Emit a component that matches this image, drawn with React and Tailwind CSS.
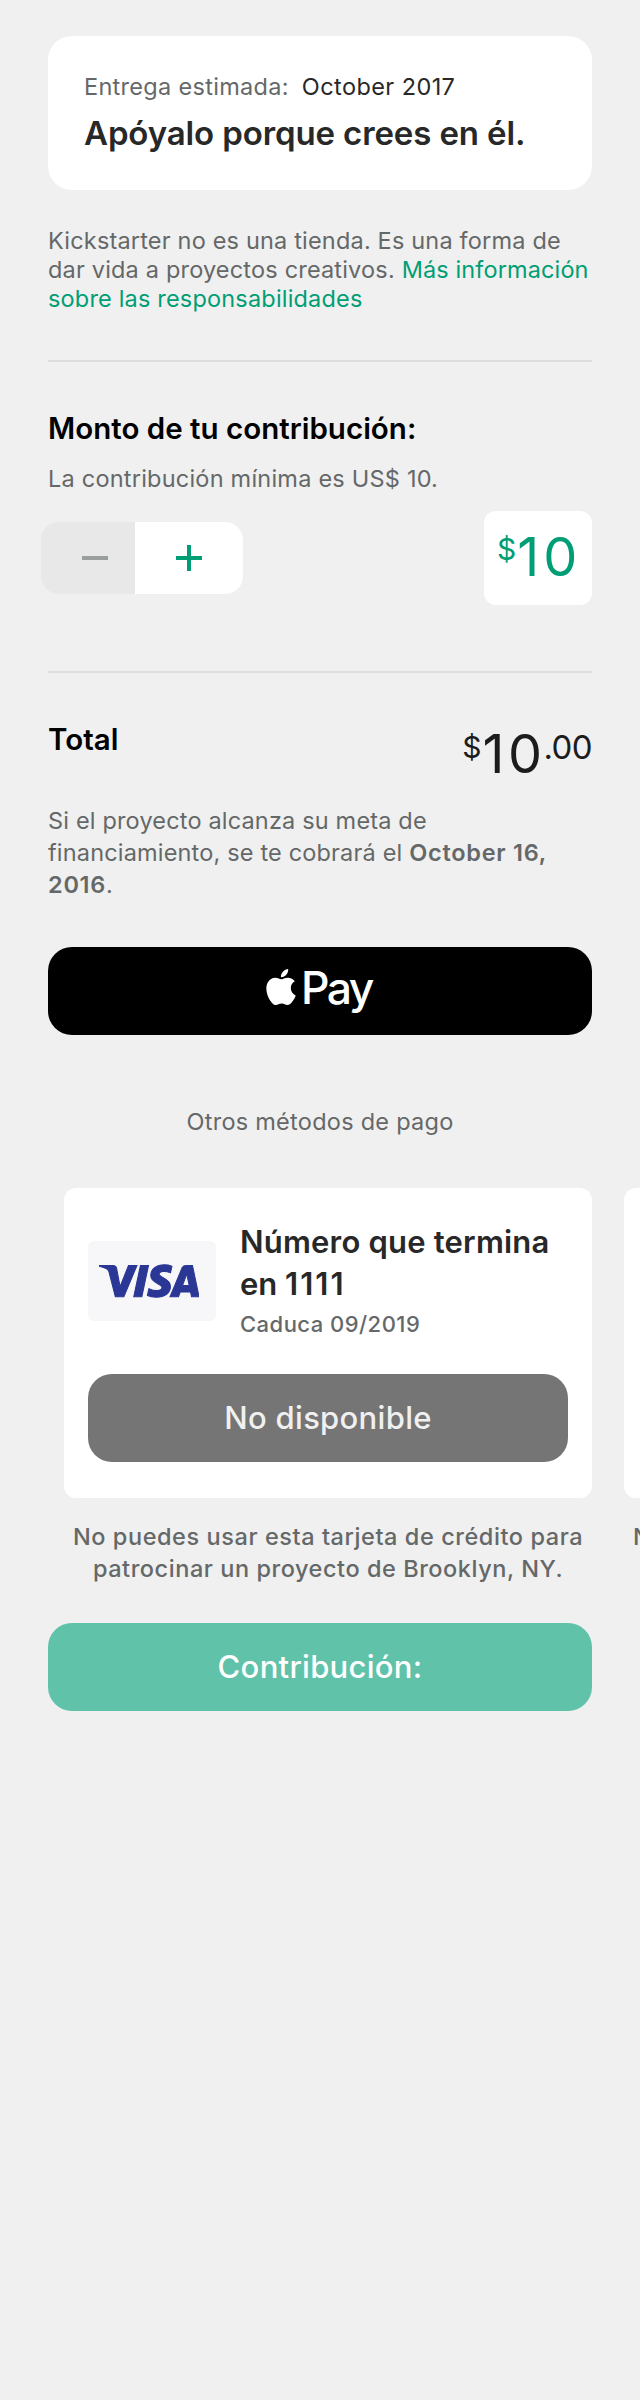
import { SiApple, SiVisa } from "react-icons/si";

function Line({ className = "", children }) {
  return <div className={`whitespace-nowrap ${className}`}>{children}</div>;
}

function Divider({ className }) {
  return <hr className={`h-[2px] border-0 bg-[#dddddd] ${className}`} />;
}

function RewardCard() {
  return (
    <section className="h-[154px] rounded-[24px] bg-white px-9 pt-[37px]">
      <div className="flex text-[23.5px] leading-7">
        <Line className="tracking-[0.3px] text-[#656868]">Entrega estimada:</Line>
        <Line className="ml-[13px] tracking-[0.42px] text-[#282828]">October 2017</Line>
      </div>
      <h1 className="mt-[12px] whitespace-nowrap text-[33px] font-semibold leading-10 tracking-[-0.12px] text-[#282828]">
        Apóyalo porque crees en él.
      </h1>
    </section>
  );
}

function Stepper() {
  return (
    <div className="-ml-[7px] flex h-[72px] w-[202px] overflow-hidden rounded-[18px]">
      <button className="flex w-[94px] items-center justify-center bg-[#e8e8e8] pl-[14px]">
        <svg className="h-[28px] w-[28px]" viewBox="0 0 28 28">
          <path d="M1 14h26" stroke="#9b9e9e" strokeWidth="4" />
        </svg>
      </button>
      <button className="flex flex-1 items-center justify-center bg-white">
        <svg className="h-[28px] w-[28px]" viewBox="0 0 28 28">
          <path d="M1 14h26M14 1v26" stroke="#009e74" strokeWidth="4" />
        </svg>
      </button>
    </div>
  );
}

function PaymentCard() {
  return (
    <div className="w-[528px] shrink-0">
      <div className="h-[310px] rounded-[12px] bg-white px-6 pt-[33px]">
        <div className="flex h-[120px] items-center gap-6">
          <div className="flex h-20 w-32 items-center rounded-md bg-[#f7f7f9] pl-[11px]">
            <SiVisa className="h-[100px] w-[100px] text-[#2a3795]" stroke="currentColor" strokeWidth="0.25" />
          </div>
          <div>
            <Line className="text-[31px] font-semibold leading-[42px] tracking-[0.2px] text-[#282828]">Número que termina</Line>
            <Line className="text-[31px] font-semibold leading-[42px] text-[#282828]">
              en <span className="tracking-[2px]">1111</span>
            </Line>
            <Line className="pt-px text-[22px] font-medium leading-9 tracking-[0.47px] text-[#656868]">Caduca 09/2019</Line>
          </div>
        </div>
        <button className="mt-[33px] h-[88px] w-full rounded-[24px] bg-[#757575] text-[31px] font-medium tracking-[0.3px] text-[#f0f0f0]">
          No disponible
        </button>
      </div>
      <div className="mt-[23px] flex flex-col items-center text-[23.5px] font-medium leading-8 text-[#656868]">
        <Line className="tracking-[0.57px]">No puedes usar esta tarjeta de crédito para</Line>
        <Line className="tracking-[0.55px]">patrocinar un proyecto de Brooklyn, NY.</Line>
      </div>
    </div>
  );
}

export default function App() {
  return (
    <main className="h-[2400px] w-[640px] overflow-hidden bg-[#f0f0f0] px-12 pt-9 font-['Inter',sans-serif] text-[#656868]">
      <RewardCard />

      <div className="mt-9 text-[23.5px] leading-[29px] tracking-[0.18px]">
        <Line>Kickstarter no es una tienda. Es una forma de</Line>
        <Line>
          dar vida a proyectos creativos. <span className="tracking-[0.12px] text-[#009e74]">Más información</span>
        </Line>
        <Line className="text-[#009e74]">sobre las responsabilidades</Line>
      </div>

      <Divider className="mt-[47px]" />

      <h2 className="mt-[48px] whitespace-nowrap text-[29.5px] font-semibold leading-9 tracking-[0.01px] text-black">
        Monto de tu contribución:
      </h2>
      <Line className="mt-[19px] text-[23.5px] leading-7 tracking-[0.22px]">La contribución mínima es US$ 10.</Line>
      <div className="mt-[18px] flex h-[94px] items-center justify-between">
        <Stepper />
        <div className="flex h-[94px] w-[108px] items-start rounded-[12px] bg-white pl-[13px] text-[#009e74]">
          <span className="mt-[20px] text-[30px] leading-9">$</span>
          <span className="ml-px mt-[16px] text-[54px] leading-[60px] tracking-[4px]">10</span>
        </div>
      </div>

      <Divider className="mt-[66px]" />

      <div className="mt-[48px] flex h-[84px] items-start justify-between">
        <h2 className="whitespace-nowrap text-[29.5px] font-semibold leading-9 text-black">Total</h2>
        <div className="flex items-start text-[#1c1c1c]">
          <span className="mt-[8px] text-[30px] leading-9">$</span>
          <span className="ml-px mt-[3px] text-[54px] leading-[60px] tracking-[3.5px]">10</span>
          <span className="-ml-[2px] mt-[8px] text-[33px] leading-9 tracking-[-0.6px]">.00</span>
        </div>
      </div>
      <div className="text-[23.5px] leading-8 tracking-[0.17px]">
        <Line>Si el proyecto alcanza su meta de</Line>
        <Line>
          financiamiento, se te cobrará el <span className="font-semibold tracking-[0.74px]">October 16,</span>
        </Line>
        <Line>
          <span className="font-semibold tracking-[0.74px]">2016</span>.
        </Line>
      </div>

      <button className="mt-[46px] flex h-[88px] w-full items-start rounded-[24px] bg-black pl-[215px] text-white">
        <SiApple className="mt-[22px] h-9 w-9" />
        <span className="ml-[2px] mt-[14px] text-[44.5px] font-medium leading-[54px] tracking-[-2.6px]">Pay</span>
      </button>

      <Line className="mt-[73px] text-center text-[23.5px] leading-7 tracking-[0.26px]">Otros métodos de pago</Line>

      <div className="mt-[52px] flex gap-8 pl-4">
        <PaymentCard />
        <PaymentCard />
      </div>

      <button className="mt-[38px] h-[88px] w-full rounded-[24px] bg-[#5fc2a9] text-[31px] font-medium tracking-[0.28px] text-white">
        Contribución:
      </button>
    </main>
  );
}
